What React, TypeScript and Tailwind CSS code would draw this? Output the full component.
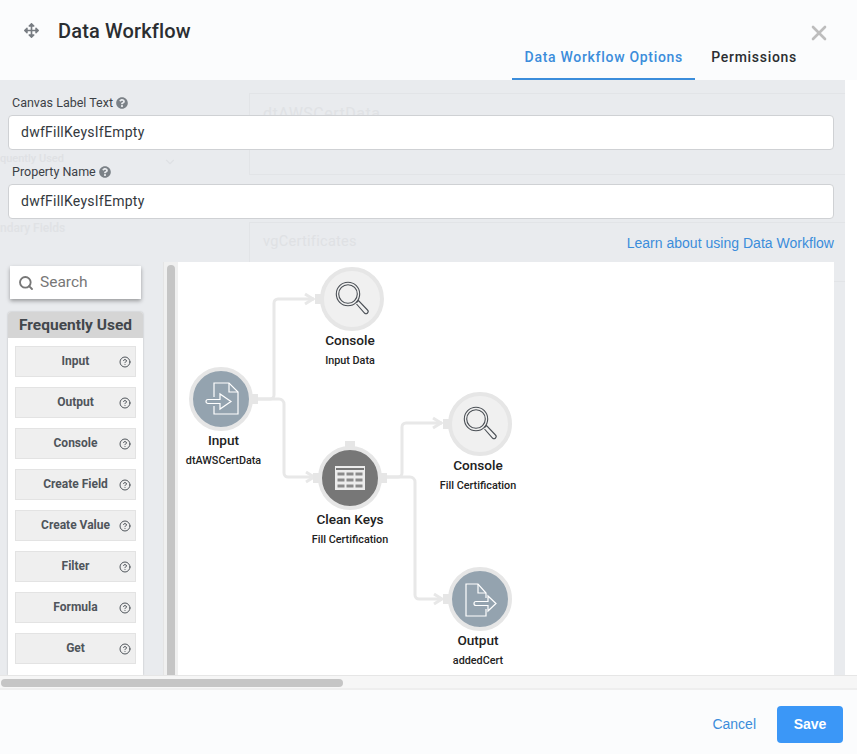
import React from "react";
import { FaArrowsAlt, FaQuestionCircle } from "react-icons/fa";
import { ChevronDown, CircleHelp, Search, X } from "lucide-react";

const items = ["Input", "Output", "Console", "Create Field", "Create Value", "Filter", "Formula", "Get"];

function Magnifier() {
  return (
    <svg viewBox="0 0 40 40" className="w-[40px] h-[40px]" fill="none" stroke="#4a4f55" strokeWidth="1.1">
      <circle cx="16" cy="15" r="11.700" />
      <circle cx="16" cy="15" r="9.300" />
      <path d="M24.500 23.500l2-2 9 9.500a1.700 1.700 0 0 1-3 3L24.500 25" />
    </svg>
  );
}

function DocIn() {
  return (
    <svg viewBox="0 0 40 40" className="w-[40px] h-[40px]" fill="none" stroke="#fff" strokeWidth="1.2">
      <path d="M13 18V4H28L37 13V35H13V27" />
      <path d="M28 4V13H37" />
      <path d="M7 20.500H19V15L30 22.500L19 30V24.500H7a2 2 0 0 1 0-4z" fill="#94a3af" />
    </svg>
  );
}

function DocOut() {
  return (
    <svg viewBox="0 0 40 40" className="w-[40px] h-[40px]" fill="none" stroke="#fff" strokeWidth="1.2">
      <path d="M26 19V14L18 5H6V37H26V30" />
      <path d="M18 5V14H26" />
      <path d="M16 22.500H28V17L36 24.500L28 32V26.500H16a2 2 0 0 1 0-4z" fill="#94a3af" />
    </svg>
  );
}

function TableIcon() {
  return (
    <svg viewBox="0 0 30 24" className="w-[30px] h-[24px]">
      <rect width="30" height="24" fill="#ececec" />
      <rect x="1" y="2" width="28" height="2" fill="#777" />
      <g fill="#8a8a8a">
        <rect x="2.500" y="6.500" width="7" height="3" />
        <rect x="11.500" y="6.500" width="7" height="3" />
        <rect x="20.500" y="6.500" width="7" height="3" />
        <rect x="2.500" y="12.500" width="7" height="3" />
        <rect x="11.500" y="12.500" width="7" height="3" />
        <rect x="20.500" y="12.500" width="7" height="3" />
        <rect x="2.500" y="18.500" width="7" height="3" />
        <rect x="11.500" y="18.500" width="7" height="3" />
        <rect x="20.500" y="18.500" width="7" height="3" />
      </g>
    </svg>
  );
}

function Node({ pos, fill, title, sub, icon, left, right, top, text }: { pos: string; fill: string; title: string; sub: string; icon: React.ReactNode; left?: boolean; right?: boolean; top?: boolean; text: string }) {
  return (
    <div className={`absolute w-[110px] flex flex-col items-center ${pos}`}>
      <div className={`relative w-[64px] h-[64px] rounded-full border-4 border-[#e6e6e6] flex items-center justify-center ${fill}`}>
        {icon}
        {left && <span className="absolute left-[-9px] top-[23px] w-[6px] h-[10px] bg-[#e6e6e6]" />}
        {right && <span className="absolute right-[-9px] top-[23px] w-[6px] h-[10px] bg-[#e6e6e6]" />}
        {top && <span className="absolute top-[-9px] left-[23px] w-[10px] h-[6px] bg-[#e6e6e6]" />}
      </div>
      <div className={`mt-[-1px] text-[13.600px] leading-[20px] font-medium text-[#222] ${text}`}>{title}</div>
      <div className={`mt-[2px] text-[10.800px] leading-[18px] font-medium text-[#222] whitespace-nowrap ${text}`}>{sub}</div>
    </div>
  );
}

function Field({ label, value, className }: { label: string; value: string; className: string }) {
  return (
    <div className={className}>
      <div className="flex items-center gap-[3px] pl-[4px] pt-[2px] h-[16px] text-[12.500px] text-[#3c4146]">
        {label}
        <FaQuestionCircle className="w-[12px] h-[12px] text-[#7b8187]" />
      </div>
      <div className="mt-[5px] h-[35px] flex items-center pl-[12px] bg-white rounded-[4px] border border-[#cfd1d4] text-[14px] tracking-[0.25px] text-[#33383d]">
        {value}
      </div>
    </div>
  );
}

export default function App() {
  return (
    <div className="relative w-[857px] h-[754px] overflow-hidden flex flex-col bg-[#fbfcfd] font-['Roboto',sans-serif]">
      <header className="h-[80px] shrink-0 flex">
        <div className="flex items-start pt-[20px] pl-[24px]">
          <FaArrowsAlt className="w-[15px] h-[15px] mt-[3px] text-[#777c82]" />
          <h1 className="ml-[19px] text-[20px] leading-[23px] font-medium tracking-[0.15px] text-[#2b2e31]">Data Workflow</h1>
        </div>
        <div className="ml-auto flex flex-col items-end">
          <X className="mt-[21px] mr-[26px] w-[24px] h-[24px] text-[#bdbdbd]" strokeWidth={2.6} />
          <div className="mt-[0px] flex pr-[60px] text-[14px] font-medium tracking-[0.7px]">
            <div className="h-[35px] w-[183px] flex justify-center items-start pt-[2px] text-[#3b8ddb] border-b-[2px] border-[#3b8ddb] relative z-10">Data Workflow Options</div>
            <div className="ml-[16px] pt-[2px] text-[#2b2e31]">Permissions</div>
          </div>
        </div>
      </header>

      <div className="h-[595px] shrink-0 flex">
        <main className="relative w-[845px] bg-[#e9ebee] flex flex-col pl-[8px] pr-[11px] overflow-hidden">
          <div className="absolute left-[249px] top-[13px] w-[600px] h-[82px] border border-[#e2e4e7] text-[16px] leading-[20px] text-[#e0e2e5] pl-[13px] pt-[10px] tracking-[0.5px]">dtAWSCertData</div>
          <div className="absolute left-[249px] top-[142px] w-[600px] h-[60px] border border-[#e2e4e7] text-[14.500px] leading-[20px] text-[#dfe1e4] pl-[13px] pt-[9px] tracking-[0.3px]">vgCertificates</div>
          <div className="absolute left-0 top-[74px] text-[11px] leading-[9px] font-medium text-[#dfe1e4]">quently Used</div>
          <div className="absolute left-0 top-[144px] text-[12px] leading-[9px] font-medium text-[#e0e2e5]">ndary Fields</div>
          <ChevronDown className="absolute left-[163px] top-[75px] w-[14px] h-[14px] text-[#dfe1e4]" />

          <Field className="relative mt-[14px]" label="Canvas Label Text" value="dwfFillKeysIfEmpty" />
          <Field className="relative mt-[13px]" label="Property Name" value="dwfFillKeysIfEmpty" />
          <a className="relative mt-[15px] h-[18px] self-end text-[14px] leading-[18px] tracking-[0.02px] text-[#3b8ddb] font-['Liberation_Sans',sans-serif]">Learn about using Data Workflow</a>

          <div className="relative mt-[10px] flex-1 min-h-0 flex">
            <aside className="w-[135px] shrink-0 flex flex-col">
              <div className="mx-[2px] mt-[4px] h-[33px] shrink-0 bg-white shadow-[0_2px_4px_rgba(0,0,0,0.35)] flex items-center pl-[8px] gap-[6px] text-[15.500px] text-[#777]">
                <Search className="w-[16px] h-[16px] text-[#777]" strokeWidth={2.8} />
                Search
              </div>
              <div className="mt-[13px] flex-1 bg-white rounded-t-[3px] shadow-[0_0_2px_rgba(0,0,0,0.25)] flex flex-col">
                <div className="h-[26px] pt-[2px] bg-[#d5d5d5] rounded-t-[3px] flex items-center justify-center text-[15.500px] font-bold text-[#42474c]">Frequently Used</div>
                <div className="px-[7px] pt-[8px] flex flex-col gap-[10px]">
                  {items.map((t) => (
                    <div key={t} className="relative h-[31px] pb-[2px] bg-[#efefef] border border-[#e3e3e3] flex items-center justify-center text-[12px] font-bold text-[#4f555b]">
                      {t}
                      <CircleHelp className="absolute right-[4px] top-[9px] w-[12px] h-[12px] text-[#4f555b]" strokeWidth={2} />
                    </div>
                  ))}
                </div>
              </div>
            </aside>

            <div className="ml-[20px] w-[15px] shrink-0 bg-[#f0f0f0] flex justify-center border-l border-[#e4e4e4] pt-[3px]">
              <div className="w-[8px] h-full rounded-t-[4px] bg-[#c5c5c5]" />
            </div>

            <div className="relative w-[656px] shrink-0 bg-white overflow-hidden">
              <svg className="absolute inset-0 w-[656px] h-[413px]" viewBox="0 0 656 413" fill="none" stroke="#e8e8e8" strokeWidth="3">
                <path d="M79 137H92a4 4 0 0 0 4-4V41a4 4 0 0 1 4-4H136" />
                <path d="M127 32l8 5-8 5" />
                <path d="M79 137H101a5 5 0 0 1 5 5V211a4 4 0 0 0 4 4H136" />
                <path d="M128 210l8 5-8 5" />
                <path d="M208 215H220a4 4 0 0 0 4-4V165a4 4 0 0 1 4-4H264" />
                <path d="M255 156l8 5-8 5" />
                <path d="M208 215H232a5 5 0 0 1 5 5V333a4 4 0 0 0 4 4H264" />
                <path d="M256 332l8 5-8 5" />
              </svg>
              <Node pos="left-[119px] top-[5px]" text="ml-[-4px]" fill="bg-[#f0f0f0]" title="Console" sub="Input Data" icon={<Magnifier />} left />
              <Node pos="left-[-12px] top-[105px]" text="ml-[5px]" fill="bg-[#94a3af]" title="Input" sub="dtAWSCertData" icon={<DocIn />} right />
              <Node pos="left-[117px] top-[184px]" text="ml-[0px]" fill="bg-[#777777]" title="Clean Keys" sub="Fill Certification" icon={<TableIcon />} left right top />
              <Node pos="left-[247px] top-[130px]" text="ml-[-4px]" fill="bg-[#f0f0f0]" title="Console" sub="Fill Certification" icon={<Magnifier />} left />
              <Node pos="left-[247px] top-[305px]" text="ml-[-4px]" fill="bg-[#94a3af]" title="Output" sub="addedCert" icon={<DocOut />} left />
            </div>
          </div>
        </main>
        <div className="flex-1 bg-white" />
      </div>

      <div className="h-[15px] shrink-0 bg-[#f6f6f6] border-t border-[#e6e6e6] border-b-2 border-b-[#eeeeee] pt-[3px] pl-[1px]">
        <div className="w-[342px] h-[8px] rounded-full bg-[#c5c5c5]" />
      </div>

      <footer className="flex-1 flex items-start justify-end pt-[16px] pr-[14px] font-['Liberation_Sans',sans-serif]">
        <button className="h-[37px] mr-[21px] text-[14px] text-[#3b8ddb]">Cancel</button>
        <button className="w-[66px] h-[37px] rounded-[4px] bg-[#3b97f7] text-white text-[14px] font-bold">Save</button>
      </footer>
    </div>
  );
}
